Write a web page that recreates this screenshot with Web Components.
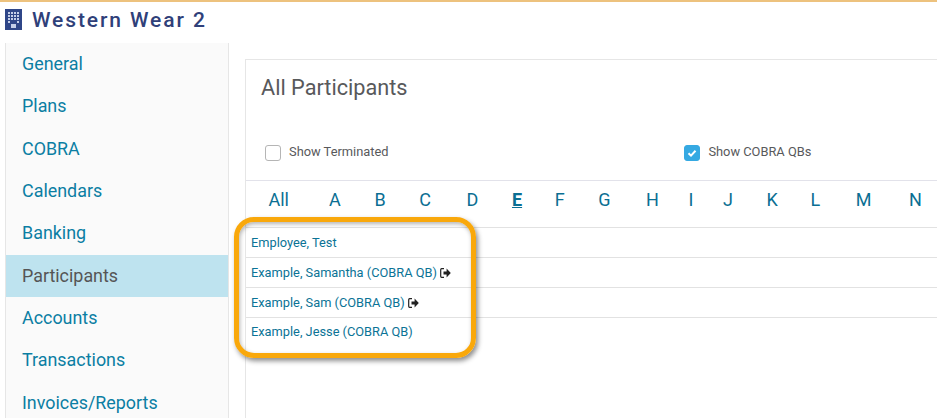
<!DOCTYPE html>
<html lang="en">
<head>
<meta charset="UTF-8">
<title>Western Wear 2</title>
<style>
    html, body { margin: 0; height: 100%; overflow: hidden; background: #fff; }
    body { font-family: Roboto, "Liberation Sans", sans-serif; }
</style>
</head>
<body>
<app-shell>
    <side-nav slot="nav"></side-nav>
    <participants-panel slot="main"></participants-panel>
    <callout-box slot="overlay"></callout-box>
</app-shell>

<script>
    class AppShell extends HTMLElement {
        constructor() {
            super();
            this.attachShadow({ mode: 'open' });
            this.shadowRoot.innerHTML = `
                <style>
                    :host { display: block; width: 937px; height: 418px; overflow: hidden; position: relative; border-top: 2px solid #edc27e; box-sizing: border-box; }
                    header { display: flex; align-items: center; height: 37px; padding-left: 5px; gap: 10px; color: #2f4079; }
                    h1 { margin: 0; font: 500 21px/1 Roboto, sans-serif; letter-spacing: 1.9px; }
                    svg { display: block; margin-top: -2px; }
                    .body { display: flex; padding: 4px 0 0 5px; gap: 16px; align-items: flex-start; }
                    ::slotted([slot="main"]) { flex: 1; min-width: 0; margin-top: 16px; }
                </style>
                <header>
                    <svg width="17" height="21" viewBox="0 0 17 21">
                        <rect width="17" height="21" fill="#2f4688"/>
                        <g fill="#c4cee8">
                            <rect x="3" y="3" width="2" height="2"/><rect x="6" y="3" width="2" height="2"/><rect x="9" y="3" width="2" height="2"/><rect x="12" y="3" width="2" height="2"/>
                            <rect x="3" y="6" width="2" height="2"/><rect x="6" y="6" width="2" height="2"/><rect x="9" y="6" width="2" height="2"/><rect x="12" y="6" width="2" height="2"/>
                            <rect x="3" y="9" width="2" height="2"/><rect x="6" y="9" width="2" height="2"/><rect x="9" y="9" width="2" height="2"/><rect x="12" y="9" width="2" height="2"/>
                            <rect x="3" y="12" width="2" height="2"/><rect x="12" y="12" width="2" height="2"/>
                            <rect x="6" y="15" width="5" height="4"/>
                        </g>
                    </svg>
                    <h1>Western Wear 2</h1>
                </header>
                <div class="body">
                    <slot name="nav"></slot>
                    <slot name="main"></slot>
                </div>
                <slot name="overlay"></slot>
            `;
        }
    }

    class SideNav extends HTMLElement {
        constructor() {
            super();
            this.attachShadow({ mode: 'open' });
            const items = ['General', 'Plans', 'COBRA', 'Calendars', 'Banking', 'Participants', 'Accounts', 'Transactions', 'Invoices/Reports'];
            this.shadowRoot.innerHTML = `
                <style>
                    :host { display: block; width: 224px; height: 380px; box-sizing: border-box; background: #fafafa; border: solid #e6e6e6; border-width: 0 1px 0 1px; flex: none; font: 17.9px/1 Roboto, sans-serif; }
                    a { display: flex; align-items: center; box-sizing: border-box; height: 42.4px; padding: 0 0 1px 16px; color: #0b7ea3; text-decoration: none; }
                    a.on { background: #bee3ef; color: #555; }
                </style>
                ${items.map(i => `<a href="#" class="${i === 'Participants' ? 'on' : ''}">${i}</a>`).join('')}
            `;
        }
    }

    class CheckOption extends HTMLElement {
        constructor() {
            super();
            this.attachShadow({ mode: 'open' });
            const checked = this.hasAttribute('checked');
            this.shadowRoot.innerHTML = `
                <style>
                    :host { display: flex; align-items: center; gap: 8px; font: 12.85px/1 Roboto, sans-serif; color: #58595b; }
                    .box { width: 16px; height: 16px; box-sizing: border-box; border-radius: 3px; border: 1px solid #b5b5b5; background: #fff; }
                    .box.on { background: #35a9e2; border-color: #35a9e2; }
                    .label { margin-bottom: 1px; }
                    svg { display: block; }
                </style>
                <span class="box ${checked ? 'on' : ''}">
                    ${checked ? '<svg width="14" height="14" viewBox="0 0 14 14"><path d="M3.5 7.2 6 9.6 10.5 4.8" fill="none" stroke="#fff" stroke-width="2"/></svg>' : ''}
                </span>
                <span class="label"><slot></slot></span>
            `;
        }
    }

    class AlphaBar extends HTMLElement {
        constructor() {
            super();
            this.attachShadow({ mode: 'open' });
            // the spacing in the source is not even, so each letter carries its own nudge
            const letters = [['All', 0.5], ['A', 6.5], ['B', 0], ['C', 0], ['D', 2], ['E', 0], ['F', -1], ['G', 0], ['H', 2], ['I', -4], ['J', -4], ['K', 0], ['L', -1], ['M', 2], ['N', 4]];
            this.shadowRoot.innerHTML = `
                <style>
                    :host { display: flex; height: 46px; box-sizing: content-box; align-items: center; gap: 33.6px; padding-left: 22px; border-bottom: 1px solid #e2e2e2; border-top: 1px solid #e2e2ea; font: 18px/1 Roboto, sans-serif; white-space: nowrap; }
                    a { color: #0b6f93; text-decoration: none; margin-bottom: 8px; }
                    a.on { font-weight: 700; text-decoration: underline; }
                </style>
                ${letters.map(([l, n]) => `<a href="#" style="margin-left:${n}px" class="${l === 'E' ? 'on' : ''}">${l}</a>`).join('')}
            `;
        }
    }

    class PersonRow extends HTMLElement {
        constructor() {
            super();
            this.attachShadow({ mode: 'open' });
            const exit = this.hasAttribute('exit');
            this.shadowRoot.innerHTML = `
                <style>
                    :host { display: flex; align-items: center; gap: 3px; box-sizing: border-box; height: 30px; padding: 1px 0 0 5px; border-bottom: 1px solid #e2e2e2; font: 12.8px/1 Roboto, sans-serif; color: #0b7396; }
                    :host([last]) { border-bottom: 0; padding-top: 0; height: 28px; }
                    svg { display: block; }
                </style>
                <slot></slot>
                ${exit ? `<svg width="11" height="10" viewBox="0 0 11 10">
                    <path d="M4 .7H1.6A1 1 0 0 0 .7 1.7v6.6a1 1 0 0 0 .9 1H4" fill="none" stroke="#222" stroke-width="1.2"/>
                    <path d="M3.5 3.4H6.6V.6L10.8 5 6.6 9.4V6.6H3.5z" fill="#222"/>
                </svg>` : ''}
            `;
        }
    }

    class ParticipantsPanel extends HTMLElement {
        constructor() {
            super();
            this.attachShadow({ mode: 'open' });
            this.shadowRoot.innerHTML = `
                <style>
                    :host { display: block; height: 360px; box-sizing: border-box; border: solid #e6e6e6; border-width: 1px 0 0 1px; }
                    h2 { margin: 0; padding: 16px 0 0 15px; height: 42px; box-sizing: content-box; font: 400 21.7px/24px Roboto, sans-serif; color: #58595b; }
                    .opts { display: flex; height: 54px; padding: 0 0 0 19px; align-items: center; box-sizing: border-box; margin-top: 8px; }
                    .opts check-option:first-child { width: 419.4px; }
                </style>
                <h2>All Participants</h2>
                <div class="opts">
                    <check-option>Show Terminated</check-option>
                    <check-option checked>Show COBRA QBs</check-option>
                </div>
                <alpha-bar></alpha-bar>
                <div class="list">
                    <person-row>Employee, Test</person-row>
                    <person-row exit>Example, Samantha (COBRA QB)</person-row>
                    <person-row exit>Example, Sam (COBRA QB)</person-row>
                    <person-row last>Example, Jesse (COBRA QB)</person-row>
                </div>
            `;
        }
    }

    class CalloutBox extends HTMLElement {
        constructor() {
            super();
            this.attachShadow({ mode: 'open' });
            this.shadowRoot.innerHTML = `
                <style>
                    :host { display: block; position: absolute; left: 234px; top: 215px; width: 242px; height: 141px; box-sizing: border-box; border: 5px solid #f9a80b; border-radius: 20px; box-shadow: 2px 3px 5px rgba(0,0,0,.45), inset 1px 2px 4px rgba(0,0,0,.3); pointer-events: none; }
                </style>
            `;
        }
    }

    customElements.define('side-nav', SideNav);
    customElements.define('check-option', CheckOption);
    customElements.define('alpha-bar', AlphaBar);
    customElements.define('person-row', PersonRow);
    customElements.define('participants-panel', ParticipantsPanel);
    customElements.define('callout-box', CalloutBox);
    customElements.define('app-shell', AppShell);
</script>
</body>
</html>
